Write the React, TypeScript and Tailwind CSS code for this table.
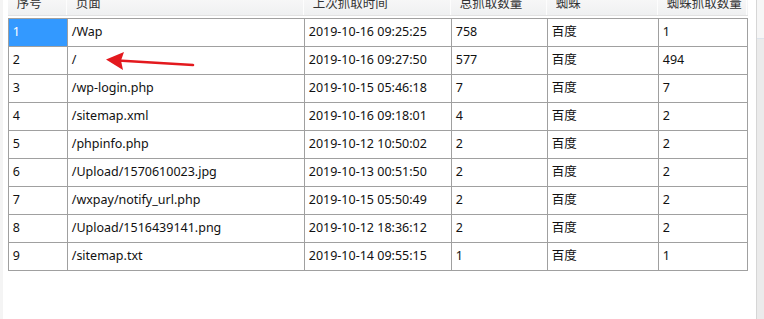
import React from 'react';

interface Row {
  id: number;
  page: string;
  lastCrawl: string;
  total: number;
  spider: string;
  spiderCount: number;
}

const rows: Row[] = [
  { id: 1, page: '/Wap', lastCrawl: '2019-10-16 09:25:25', total: 758, spider: '百度', spiderCount: 1 },
  { id: 2, page: '/', lastCrawl: '2019-10-16 09:27:50', total: 577, spider: '百度', spiderCount: 494 },
  { id: 3, page: '/wp-login.php', lastCrawl: '2019-10-15 05:46:18', total: 7, spider: '百度', spiderCount: 7 },
  { id: 4, page: '/sitemap.xml', lastCrawl: '2019-10-16 09:18:01', total: 4, spider: '百度', spiderCount: 2 },
  { id: 5, page: '/phpinfo.php', lastCrawl: '2019-10-12 10:50:02', total: 2, spider: '百度', spiderCount: 2 },
  { id: 6, page: '/Upload/1570610023.jpg', lastCrawl: '2019-10-13 00:51:50', total: 2, spider: '百度', spiderCount: 2 },
  { id: 7, page: '/wxpay/notify_url.php', lastCrawl: '2019-10-15 05:50:49', total: 2, spider: '百度', spiderCount: 2 },
  { id: 8, page: '/Upload/1516439141.png', lastCrawl: '2019-10-12 18:36:12', total: 2, spider: '百度', spiderCount: 2 },
  { id: 9, page: '/sitemap.txt', lastCrawl: '2019-10-14 09:55:15', total: 1, spider: '百度', spiderCount: 1 },
];

const headers = ['序号', '页面', '上次抓取时间', '总抓取数量', '蜘蛛', '蜘蛛抓取数量'];

const cols = 'grid grid-cols-[59px_237px_147px_96px_111px_89px]';

const App = () => {
  return (
    <div
      className="relative flex w-[764px] h-[319px] bg-white overflow-hidden text-[12.5px] text-[#111]"
      style={{ fontFamily: '"Noto Sans", "Noto Sans CJK SC", sans-serif' }}
    >
      <div className="w-[3px] bg-[#f4f4f4]" />

      <div className="pl-[5px] pr-[8px]">
        {/* header, scrolled so only the bottom shows */}
        <div className="h-[16px] overflow-hidden border-b border-[#e2e2e2]">
          <div className={`${cols} h-[24px] -mt-[8px] bg-gradient-to-b from-[#fafafa] to-[#eff0f1] text-[#333]`}>
            {headers.map((h, i) => (
              <div key={i} className="flex items-center pl-[9px] border-r border-[#fdfdfd]">
                {h}
              </div>
            ))}
          </div>
        </div>
        <div className="h-[2px]" />

        <div className="border-l border-t border-[#a0a0a0]">
          {rows.map((r) => (
            <div key={r.id} className={`${cols} h-[28px]`}>
              <div
                className={`flex items-center pl-[4px] border-r border-b border-[#a0a0a0] ${
                  r.id === 1 ? 'bg-[#3399ff] text-white' : ''
                }`}
              >
                {r.id}
              </div>
              <div className="flex items-center pl-[4px] border-r border-b border-[#a0a0a0]">{r.page}</div>
              <div className="flex items-center pl-[4px] border-r border-b border-[#a0a0a0]">{r.lastCrawl}</div>
              <div className="flex items-center pl-[4px] border-r border-b border-[#a0a0a0]">{r.total}</div>
              <div className="flex items-center pl-[4px] border-r border-b border-[#a0a0a0]">{r.spider}</div>
              <div className="flex items-center pl-[4px] border-r border-b border-[#a0a0a0]">{r.spiderCount}</div>
            </div>
          ))}
        </div>
      </div>

      {/* scrollbar track */}
      <div className="w-[9px] border-l border-[#d6d6d6] bg-[#ebebeb] flex flex-col">
        <div className="h-[39px] bg-[#f6f6f6] border-b border-[#dde4ec]" />
      </div>

      {/* red annotation arrow */}
      <svg className="absolute left-0 top-0 pointer-events-none" width="764" height="319">
        <line x1="118" y1="60.5" x2="193" y2="65" stroke="#e3191e" strokeWidth="2.6" strokeLinecap="round" />
        <polygon points="106,59.5 124,52 121,60.5 123,70" fill="#e3191e" />
      </svg>
    </div>
  );
};

export default App;
